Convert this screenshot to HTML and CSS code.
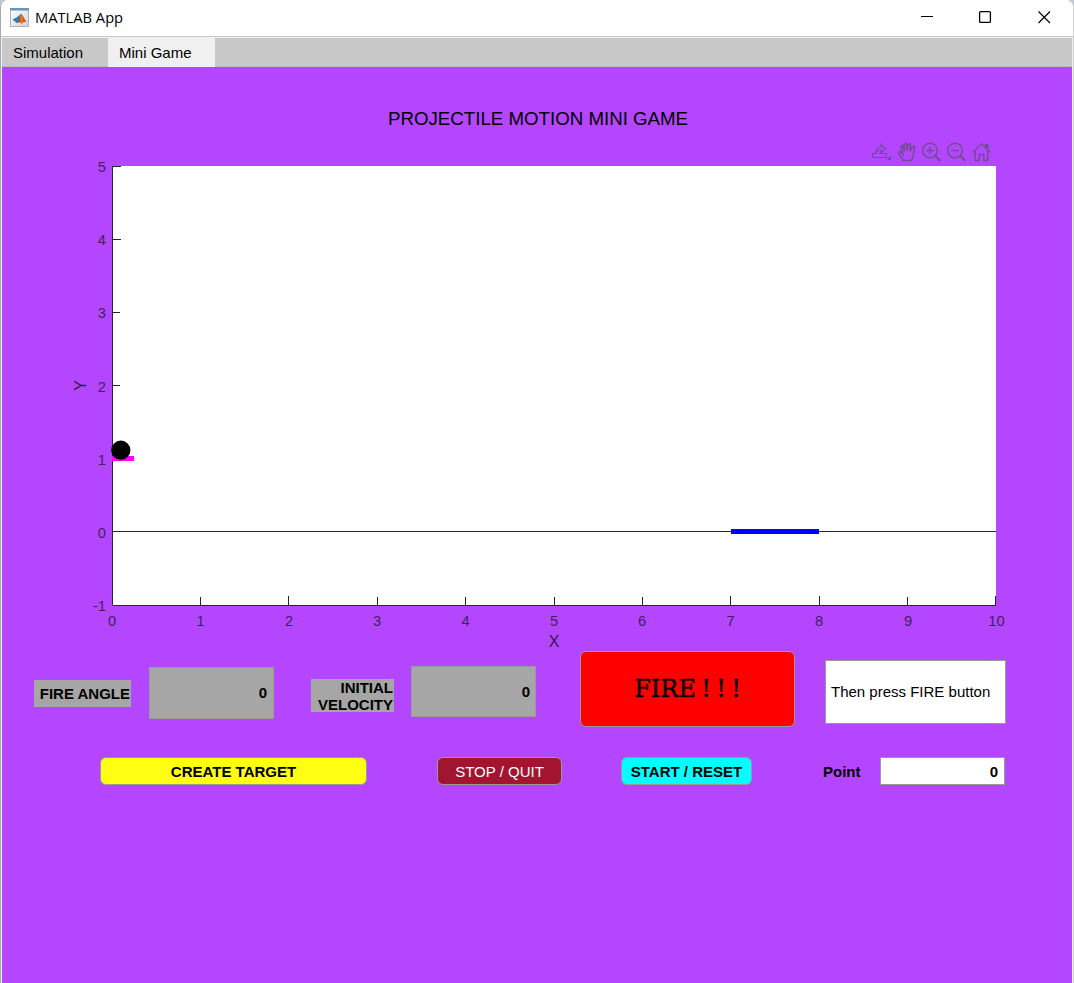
FILE: index.html
```html
<!DOCTYPE html>
<html lang="en">
<head>
<meta charset="utf-8">
<title>MATLAB App</title>
<link rel="stylesheet" href="styles.css">
</head>
<body>
<div class="window">
  <header class="titlebar">
    <svg class="app-icon" width="20" height="20" viewBox="0 0 20 20">
      <defs><linearGradient id="paper" x2="1" y2="1"><stop offset="0" stop-color="#fff"/><stop offset="1" stop-color="#cfd4da"/></linearGradient>
      <linearGradient id="peak"><stop offset="0" stop-color="#7a1d12"/><stop offset=".5" stop-color="#f07a20"/><stop offset="1" stop-color="#b52d12"/></linearGradient></defs>
      <rect x=".5" y=".5" width="18" height="18" fill="url(#paper)" stroke="#a9b4c0"/>
      <path d="M0 0h19v2.500H0z" fill="#6a94c0"/>
      <path d="M2.500 11.500 6.500 9.500l5-4-2 7-3 2.500z" fill="#2f7fb5"/>
      <path d="M6.500 15 9 11.500 11.500 5.500c2 2 3 6.500 5 9-2-1.500-3.500-.5-5 2-1-2-2-3-5-1.500z" fill="url(#peak)"/>
    </svg>
    <span class="app-name">MATLAB App</span>
    <svg class="window-controls" width="130" height="14" viewBox="0 0 130 14" fill="none" stroke="#000">
      <path d="M0 6.500h12" stroke-width="1"/>
      <rect x="58.600" y="1.600" width="10.800" height="10.800" rx="1" stroke-width="1.300"/>
      <path d="m117.500 1.500 11.500 11.500m0-11.500-11.500 11.500" stroke-width="1.200"/>
    </svg>
  </header>
  <nav class="tabs">
    <span class="tab">Simulation</span>
    <span class="tab tab-active">Mini Game</span>
  </nav>
  <main class="panel">
    <h1 class="title">PROJECTILE MOTION MINI GAME</h1>
    <div class="toolbar">
      <svg class="thin" width="20" height="20" viewBox="0 0 20 20"><path d="M4 11.500H1.500v4h14v-4H8M4.500 11.500C4.500 8 6.500 5 10 5V2.500l4.500 4-4.500 4V8C7.500 8 6 9 4.500 11.500z"/><path class="solid" d="M20 13.500V18h-4.500z"/></svg>
      <svg width="20" height="20" viewBox="0 0 20 20"><path d="M5.500 18.500c-.5-2.500-3-4-4.300-7-.5-1.500 1.300-2.200 2.200-1l2 2L3.500 5c-.2-1.500 1.600-2 2-.5L7 9.500 6.700 2.800c0-1.600 2-1.600 2.200 0L9.500 9l1-6.400c.3-1.500 2.200-1.200 2.100.3L12.500 9.500l2-4.800c.6-1.300 2.400-.7 2.100.6l-.8 5c-.3 3.500-.5 5.500-2.300 8.200z" transform="translate(1.200) scale(1.050 1)"/></svg>
      <svg width="20" height="20" viewBox="0 0 20 20"><circle cx="9" cy="8.500" r="7.300"/><path d="M5 8.500h8M9 4.500v8"/><path class="handle" d="m14 13.500 5.500 5.500"/></svg>
      <svg width="20" height="20" viewBox="0 0 20 20"><circle cx="9" cy="8.500" r="7.300"/><path d="M5 8.500h8"/><path class="handle" d="m14 13.500 5.500 5.500"/></svg>
      <svg width="20" height="20" viewBox="0 0 20 20"><path d="M1.500 10.500 10.500 1.800l9 8.700M4.200 9v9.500h4v-6h4.600v6h4V9"/><path class="solid" d="M14 2h3.500v5.500L14 4.500z"/></svg>
    </div>
    <svg class="plot" width="950" height="484" viewBox="60 166 950 484">
      <rect class="plot-area" x="112" y="166" width="884" height="440"/>
      <path class="axis" d="M112.500 166v439.500H996M112 166.500h9M112 239.500h9M112 312.500h8M112 385.500h8M112 458.500h9M112 531.500h884M200.500 606v-9M288.500 606v-10M377.500 606v-9M465.500 606v-9M554.500 606v-9M642.500 606v-9M730.500 606v-10M819.500 606v-10M907.500 606v-9M995.500 606v-10"/>
      <path class="platform" d="M112 458.500h22"/>
      <path class="target" d="M731 531.500h88"/>
      <circle cx="120.800" cy="450.200" r="9.600"/>
      <g class="ticks ticks-y">
        <text x="106" y="172">5</text><text x="106" y="245">4</text><text x="106" y="318">3</text><text x="106" y="392">2</text><text x="106" y="465">1</text><text x="106" y="538">0</text><text x="106" y="611">-1</text>
      </g>
      <g class="ticks ticks-x">
        <text x="112" y="626">0</text><text x="200.500" y="626">1</text><text x="289" y="626">2</text><text x="377" y="626">3</text><text x="465.500" y="626">4</text><text x="554" y="626">5</text><text x="642" y="626">6</text><text x="730.500" y="626">7</text><text x="819" y="626">8</text><text x="908" y="626">9</text><text x="996.500" y="626">10</text>
      </g>
      <text class="axis-name" x="554" y="647">X</text>
      <text class="axis-name" transform="translate(86 385.500) rotate(-90)">Y</text>
    </svg>
    <section class="controls">
      <label class="label label-angle">FIRE ANGLE</label>
      <div class="field field-angle">0</div>
      <label class="label label-velocity">INITIAL<br>VELOCITY</label>
      <div class="field field-velocity">0</div>
      <button class="button fire">FIRE ! ! !</button>
      <div class="message">Then press FIRE button</div>
    </section>
    <section class="actions">
      <button class="button create">CREATE TARGET</button>
      <button class="button stop">STOP / QUIT</button>
      <button class="button start">START / RESET</button>
      <label class="point-label">Point</label>
      <div class="field point">0</div>
    </section>
  </main>
</div>
</body>
</html>
```
FILE: styles.css
```css
* { box-sizing: border-box; }
body {
  margin: 0;
  background: #c3ccd6;
  font-family: "Liberation Sans", Arial, sans-serif;
  font-size: 15px;
  color: #000;
}
.window {
  display: flex;
  flex-direction: column;
  height: 983px;
  border-left: 1px solid #a9a9a9;
  border-right: 1px solid #d0d0d0;
  border-radius: 8px 8px 0 0;
  background: #f0f0f0;
  overflow: hidden;
}
.titlebar {
  display: flex;
  align-items: center;
  height: 37px;
  padding: 0 22px 2px 9px;
  background: #fff;
  border-bottom: 1px solid #c8c8c8;
}
.app-icon { margin-top: 1px; }
.app-name {
  margin: 0 auto 1px 5px;
  font-family: "Open Sans", sans-serif;
  font-size: 14.700px;
}
.tabs {
  display: flex;
  height: 29px;
  margin: 1px 1px 0;
  background: #c8c8c8;
  border-bottom: 1px solid #bdbdbd;
}
.tab {
  width: 106px;
  height: 29px;
  padding-left: 11px;
  line-height: 30px;
}
.tab-active {
  width: 107px;
  background: #f0f0f0;
}
.panel {
  flex: 1;
  margin: 0 1px;
  background: #b446ff;
}
.title {
  margin: 40px 0 0;
  padding-left: 386px;
  font-size: 18.700px;
  font-weight: 400;
  line-height: 23px;
}
.toolbar {
  display: flex;
  gap: 5px;
  height: 24px;
  margin: 12px 0 0 869px;
}
.toolbar svg {
  fill: none;
  stroke: #734c96;
  stroke-width: 1.500;
}
.toolbar .thin { stroke-width: 1.100; }
.toolbar .solid { fill: #734c96; stroke: none; }
.toolbar .handle { stroke-width: 2.200; }
.plot { display: block; margin-left: 58px; overflow: visible; }
.plot-area { fill: #fff; }
.axis { fill: none; stroke: #262626; }
.platform { stroke: #f0f; stroke-width: 5; }
.target { stroke: #00f; stroke-width: 5; }
.ticks { fill: #3f2358; font-size: 14.670px; }
.ticks-y { text-anchor: end; }
.ticks-x { text-anchor: middle; }
.axis-name { fill: #301c44; font-size: 16px; text-anchor: middle; }
.controls, .actions {
  display: flex;
  align-items: flex-start;
}
.controls { padding: 1px 0 0 32px; }
.label {
  background: #a6a6a6;
  font-weight: 700;
  font-size: 15px;
  text-align: right;
  white-space: nowrap;
}
.label-angle { width: 97px; height: 27px; margin-top: 29px; padding-right: 1px; line-height: 27px; }
.label-velocity { width: 83px; height: 33px; margin: 28px 0 0 37px; padding: 1px 1px 0 0; line-height: 16.500px; }
.field {
  display: flex;
  align-items: center;
  justify-content: flex-end;
  width: 125px;
  padding-right: 6px;
  border: 1px solid #999;
  background: #a6a6a6;
  font-weight: 700;
}
.field-angle { height: 52px; margin: 16px 0 0 18px; padding-bottom: 1px; }
.field-velocity { height: 51px; margin: 15px 0 0 17px; padding-right: 5px; }
.button {
  padding: 0;
  border: 1px solid #999;
  border-radius: 6px;
  font: 700 15px "Liberation Sans", Arial, sans-serif;
  color: #000;
  white-space: nowrap;
}
.fire {
  width: 215px;
  height: 76px;
  margin-left: 44px;
  background: #f00;
  font: 400 24px "DejaVu Serif", serif;
  word-spacing: -2.300px;
  -webkit-text-stroke: .4px #000;
}
.message {
  width: 181px;
  height: 64px;
  margin: 9px 0 0 30px;
  padding-left: 5px;
  border: 1px solid #999;
  background: #fff;
  line-height: 62px;
  white-space: nowrap;
}
.actions { padding: 30px 0 0 98px; }
.actions .button { height: 28px; padding-top: 1px; }
.create { width: 267px; background: #ffff12; }
.actions .stop { width: 125px; margin-left: 70px; background: #a2142f; color: #fff; font-weight: 400; }
.start { width: 131px; margin-left: 59px; background: #0ff; }
.point-label { width: 57px; margin-left: 71px; font-weight: 700; font-size: 15px; line-height: 29px; }
.point { height: 28px; background: #fff; }
```
